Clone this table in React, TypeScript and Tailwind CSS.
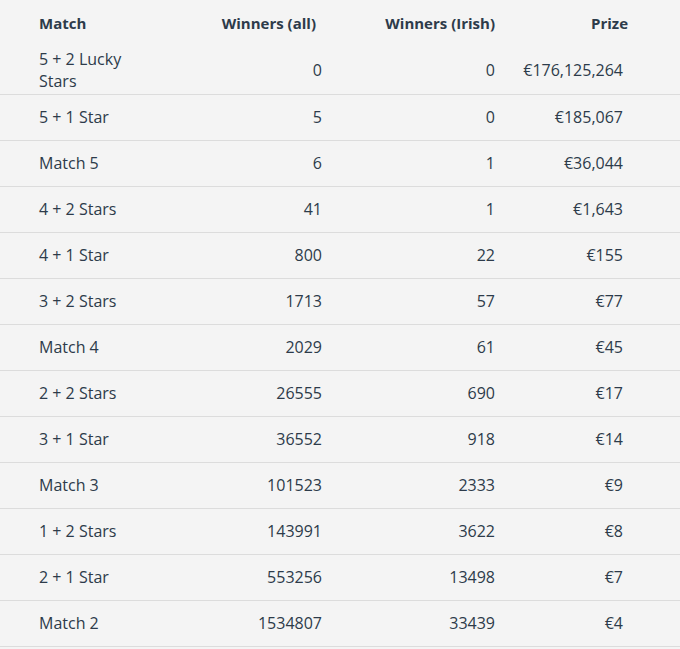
import React from "react";

const rows: [string, string, string, string][] = [
  ["5 + 2 Lucky Stars", "0", "0", "€176,125,264"],
  ["5 + 1 Star", "5", "0", "€185,067"],
  ["Match 5", "6", "1", "€36,044"],
  ["4 + 2 Stars", "41", "1", "€1,643"],
  ["4 + 1 Star", "800", "22", "€155"],
  ["3 + 2 Stars", "1713", "57", "€77"],
  ["Match 4", "2029", "61", "€45"],
  ["2 + 2 Stars", "26555", "690", "€17"],
  ["3 + 1 Star", "36552", "918", "€14"],
  ["Match 3", "101523", "2333", "€9"],
  ["1 + 2 Stars", "143991", "3622", "€8"],
  ["2 + 1 Star", "553256", "13498", "€7"],
  ["Match 2", "1534807", "33439", "€4"],
];

export default function App() {
  return (
    <div
      className="w-[680px] h-[649px] bg-[#f4f4f4] text-[#2d3b4a] text-[16px] leading-[22px]"
      style={{ fontFamily: "'Open Sans', sans-serif" }}
    >
      <div className="grid grid-cols-[100px_183px_173px_128px] pl-[39px] h-[46px] items-center font-bold text-[15px]">
        <div>Match</div>
        <div className="text-right pr-[6px]">Winners (all)</div>
        <div className="text-right">Winners (Irish)</div>
        <div className="text-right -mr-[5px]">Prize</div>
      </div>
      {rows.map((r, i) => (
        <div
          key={i}
          className={`grid grid-cols-[100px_183px_173px_128px] pl-[39px] items-center border-b border-[#dcdcdc] ${
            i === 0 ? "h-[49px]" : "h-[46px]"
          }`}
        >
          <div className="-mt-[1px]">{r[0]}</div>
          <div className="text-right -mt-[1px]">{r[1]}</div>
          <div className="text-right -mt-[1px]">{r[2]}</div>
          <div className="text-right -mt-[1px]">{r[3]}</div>
        </div>
      ))}
    </div>
  );
}
